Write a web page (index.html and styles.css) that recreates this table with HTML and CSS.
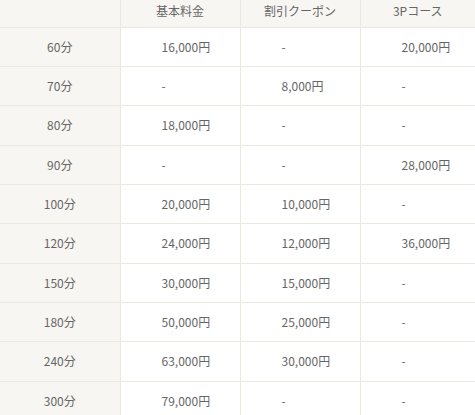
FILE: index.html
```html
<!DOCTYPE html>
<html lang="ja">
<head>
<meta charset="utf-8">
<link rel="stylesheet" href="styles.css">
</head>
<body>
<table class="price">
  <colgroup>
    <col class="c-time"><col class="c-a"><col class="c-b"><col class="c-c">
  </colgroup>
  <thead>
    <tr><th></th><th>基本料金</th><th>割引クーポン</th><th>3Pコース</th></tr>
  </thead>
  <tbody>
    <tr><th>60分</th><td>16,000円</td><td>-</td><td>20,000円</td></tr>
    <tr><th>70分</th><td>-</td><td>8,000円</td><td>-</td></tr>
    <tr><th>80分</th><td>18,000円</td><td>-</td><td>-</td></tr>
    <tr><th>90分</th><td>-</td><td>-</td><td>28,000円</td></tr>
    <tr><th>100分</th><td>20,000円</td><td>10,000円</td><td>-</td></tr>
    <tr><th>120分</th><td>24,000円</td><td>12,000円</td><td>36,000円</td></tr>
    <tr><th>150分</th><td>30,000円</td><td>15,000円</td><td>-</td></tr>
    <tr><th>180分</th><td>50,000円</td><td>25,000円</td><td>-</td></tr>
    <tr><th>240分</th><td>63,000円</td><td>30,000円</td><td>-</td></tr>
    <tr><th>300分</th><td>79,000円</td><td>-</td><td>-</td></tr>
  </tbody>
</table>
</body>
</html>
```
FILE: styles.css
```css
html, body {
  margin: 0;
  padding: 0;
  background: #fff;
}
body {
  font-family: "Noto Sans CJK JP", "Noto Sans", sans-serif;
  font-size: 12px;
  color: #666;
}
.price {
  width: 475px;
  border-collapse: collapse;
  table-layout: fixed;
}
.c-time, .c-a, .c-b { width: 120px; }
.price th, .price td {
  border-right: 1px solid #ebe8e0;
  border-bottom: 1px solid #ebe8e0;
  font-weight: normal;
  line-height: 16px;
  padding: 0;
}
.price th:last-child, .price td:last-child { border-right: none; }
.price thead th {
  background: #f7f6f2;
  height: 27px;
  padding-bottom: 4px;
  box-sizing: border-box;
  text-align: center;
}
.price tbody tr { height: 39.35px; }
.price tbody th {
  background: #f7f6f2;
  text-align: center;
}
.price tbody td {
  background: #fff;
  text-align: left;
  padding-left: 41px;
}
```
